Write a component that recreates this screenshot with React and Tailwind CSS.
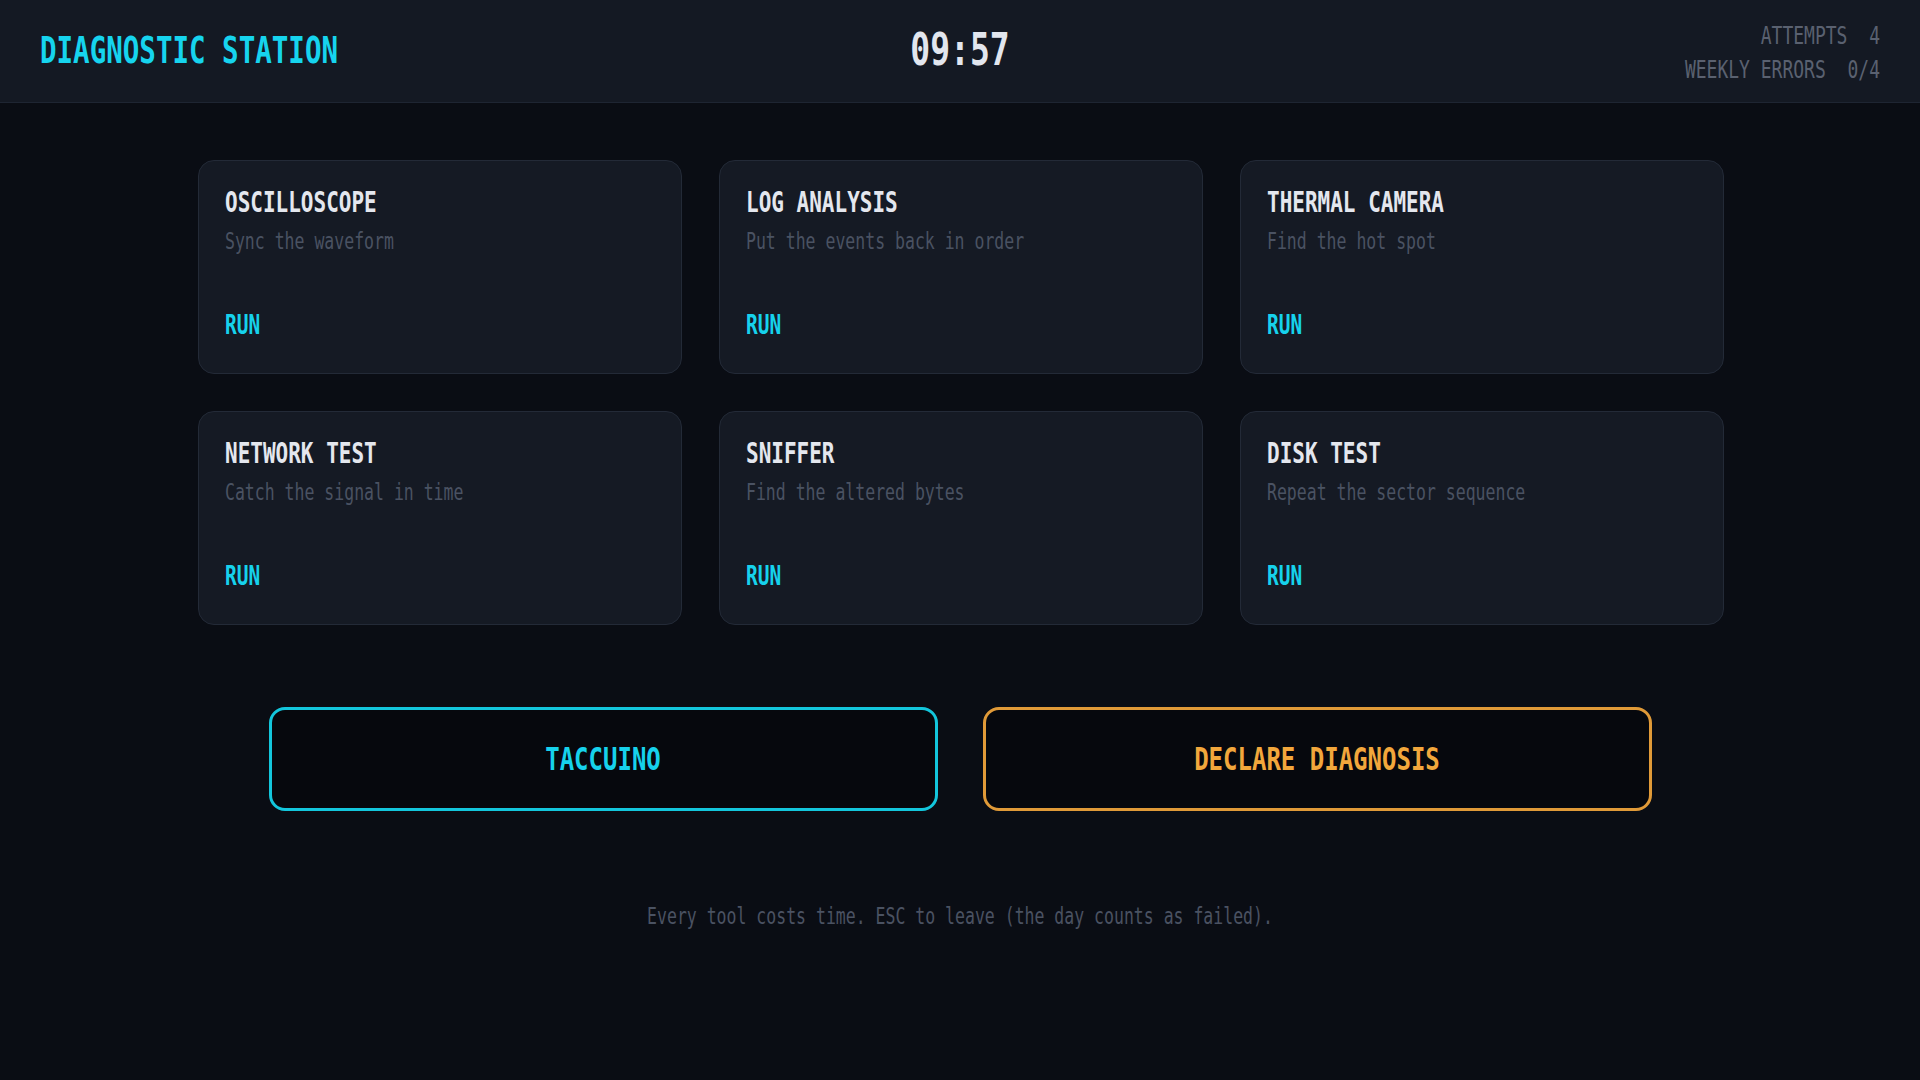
import React from "react";

const tools = [
  { name: "OSCILLOSCOPE", hint: "Sync the waveform" },
  { name: "LOG ANALYSIS", hint: "Put the events back in order" },
  { name: "THERMAL CAMERA", hint: "Find the hot spot" },
  { name: "NETWORK TEST", hint: "Catch the signal in time" },
  { name: "SNIFFER", hint: "Find the altered bytes" },
  { name: "DISK TEST", hint: "Repeat the sector sequence" },
];

// tall, narrow terminal lettering
const Tall = ({ children, className = "" }) => (
  <span className={"inline-block scale-y-[1.35] whitespace-pre " + className}>
    {children}
  </span>
);

const ToolCard = ({ tool }) => (
  <div className="h-[214px] rounded-2xl border border-[#232a37] bg-[#151a24] pt-[28px] px-[26px] pb-[34px] flex flex-col">
    <div className="text-[21px] leading-[28px] font-bold text-[#e4e7ee]">
      <Tall>{tool.name}</Tall>
    </div>
    <div className="mt-[13px] text-[16.5px] leading-[24px] text-[#4a5262]">
      <Tall>{tool.hint}</Tall>
    </div>
    <div className="mt-auto text-[19.5px] leading-[26px] font-bold text-[#16d2ec]">
      <Tall>RUN</Tall>
    </div>
  </div>
);

const App = () => {
  return (
    <div
      className="min-h-screen w-full bg-[#0a0d14] text-[#e4e7ee]"
      style={{ fontFamily: '"DejaVu Sans Mono", "Liberation Mono", monospace' }}
    >
      <header className="h-[103px] grid grid-cols-3 items-center px-10 bg-[#141923] border-b border-[#1e2532]">
        <div className="text-[27.5px] font-bold text-[#16d4ee]">
          <Tall>DIAGNOSTIC STATION</Tall>
        </div>
        <div className="text-center text-[33px] font-bold text-[#e2e6ee] -mt-[3px]">
          <Tall>09:57</Tall>
        </div>
        <div className="flex flex-col items-end pt-[3px] text-[18px] leading-[34px] text-[#5a6170]">
          <Tall>ATTEMPTS  4</Tall>
          <Tall>WEEKLY ERRORS  0/4</Tall>
        </div>
      </header>

      <main className="flex flex-col items-center">
        <div className="mt-[57px] ml-[2px] w-[1526px] grid grid-cols-3 gap-x-[37px] gap-y-[37px]">
          {tools.map((tool) => (
            <ToolCard key={tool.name} tool={tool} />
          ))}
        </div>

        <div className="mt-[82px] flex gap-[45px]">
          <button className="w-[669px] h-[104px] rounded-[16px] border-[3px] border-[#13c6dc] bg-[#06080d] text-[24px] font-bold text-[#16d2ec]">
            <Tall>TACCUINO</Tall>
          </button>
          <button className="w-[669px] h-[104px] rounded-[16px] border-[3px] border-[#e09a38] bg-[#06080d] text-[24px] font-bold text-[#f2a73c]">
            <Tall>DECLARE DIAGNOSIS</Tall>
          </button>
        </div>

        <p className="mt-[94px] text-[16.5px] leading-[24px] text-[#4a5262]">
          <Tall>Every tool costs time. ESC to leave (the day counts as failed).</Tall>
        </p>
      </main>
    </div>
  );
};

export default App;
